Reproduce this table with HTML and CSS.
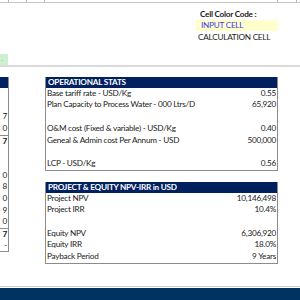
FILE: index.html
```html
<!DOCTYPE html>
<html>
<head>
<meta charset="utf-8">
<link rel="stylesheet" href="styles.css">
</head>
<body>
<div class="sheet">
  <div class="colbar">
    <span class="col w9"></span><span class="col w18"></span><span class="col w18"></span><span class="col w233"></span><span class="col w19"></span>
  </div>
  <div class="legend">
    <div class="legend-title">Cell Color Code :</div>
    <div class="legend-input">INPUT CELL</div>
    <div class="legend-calc">CALCULATION CELL</div>
  </div>
  <div class="green-row"><div class="green-cell">-</div></div>
  <div class="pane-line"></div>
  <div class="main">
    <div class="left-table">
      <div class="lt-hdr"></div>
      <div class="lt-row"></div>
      <div class="lt-row"></div>
      <div class="lt-row">7</div>
      <div class="lt-row">0</div>
      <div class="lt-row total">7</div>
      <div class="lt-row"></div>
      <div class="lt-row"></div>
      <div class="lt-row">0</div>
      <div class="lt-row">8</div>
      <div class="lt-row">0</div>
      <div class="lt-row">9</div>
      <div class="lt-row">0</div>
      <div class="lt-row total">7</div>
      <div class="lt-row">-</div>
    </div>
    <div class="right-col">
      <section class="box">
        <div class="box-hdr">OPERATIONAL STATS</div>
        <div class="row"><span>Base tariff rate - USD/Kg</span><span>0.55</span></div>
        <div class="row"><span>Plan Capacity to Process Water - 000 Ltrs/D</span><span>65,920</span></div>
        <div class="row"></div>
        <div class="row"><span>O&amp;M cost (Fixed &amp; variable) - USD/Kg</span><span>0.40</span></div>
        <div class="row"><span>Geneal &amp; Admin cost Per Annum - USD</span><span>500,000</span></div>
        <div class="row"></div>
        <div class="row"><span>LCP - USD/Kg</span><span>0.56</span></div>
      </section>
      <section class="box">
        <div class="box-hdr">PROJECT &amp; EQUITY NPV-IRR in USD</div>
        <div class="row"><span>Project NPV</span><span>10,146,498</span></div>
        <div class="row"><span>Project IRR</span><span>10.4%</span></div>
        <div class="row"></div>
        <div class="row"><span>Equity NPV</span><span>6,306,920</span></div>
        <div class="row"><span>Equity IRR</span><span>18.0%</span></div>
        <div class="row"><span>Payback Period</span><span>9 Years</span></div>
      </section>
    </div>
  </div>
  <div class="footer-line"></div>
  <div class="footer-bar"></div>
</div>
</body>
</html>
```
FILE: styles.css
```css
html, body {
  margin: 0;
  padding: 0;
  background: #ffffff;
}
.sheet {
  width: 300px;
  height: 300px;
  overflow: hidden;
  font-family: "Lato", "Liberation Sans", sans-serif;
  font-size: 8.2px;
  letter-spacing: -0.25px;
  color: #1a1a1a;
  display: flex;
  flex-direction: column;
}
.colbar {
  height: 2px;
  display: flex;
  border-bottom: 1px solid #c4c4c4;
}
.col {
  border-right: 1px solid #b4b4b4;
  box-sizing: border-box;
}
.w9 { width: 9px; flex: none; }
.w18 { width: 18px; flex: none; }
.w233 { width: 233px; flex: none; }
.w19 { width: 19px; flex: none; }
.legend {
  margin-top: 5px;
  padding-left: 196px;
  width: 82px;
  display: flex;
  flex-direction: column;
}
.legend-title {
  height: 12px;
  line-height: 12px;
  font-weight: bold;
  padding-left: 4px;
}
.legend-input {
  height: 11px;
  line-height: 11px;
  background: #ffffcc;
  color: #3b3bf0;
  padding-left: 5px;
}
.legend-calc {
  height: 12px;
  line-height: 12px;
  padding-left: 2px;
}
.green-row {
  margin-top: 11px;
  height: 11px;
}
.green-cell {
  width: 8px;
  height: 11px;
  background: #cdf0d2;
  color: #8aa88e;
  font-size: 6px;
  line-height: 11px;
  padding-left: 1px;
  box-sizing: border-box;
}
.pane-line {
  height: 2px;
  background: #dadada;
}
.main {
  display: flex;
  align-items: flex-start;
  margin-top: 10px;
  height: 208px;
}
.left-table {
  width: 8px;
  border-right: 1px solid #8c8c8c;
  border-bottom: 1px solid #8c8c8c;
  flex: none;
}
.lt-hdr {
  height: 11px;
  background: #002060;
}
.lt-row {
  height: 11.7px;
  line-height: 11.7px;
  text-align: right;
  padding-right: 1px;
  box-sizing: border-box;
}
.lt-row.total {
  font-weight: bold;
  border-top: 1px solid #8c8c8c;
}
.right-col {
  margin-left: 36px;
  width: 233px;
  display: flex;
  flex-direction: column;
  gap: 11px;
}
.box {
  border: 1px solid #8c8c8c;
  border-top: none;
}
.box-hdr {
  height: 11px;
  line-height: 11px;
  background: #002060;
  color: #ffffff;
  font-weight: bold;
  padding-left: 2px;
}
.row {
  height: 11.7px;
  line-height: 11.7px;
  display: flex;
  justify-content: space-between;
  padding: 0 1px 0 1px;
}
.footer-line {
  margin-top: 13px;
  height: 1px;
  background: #d0d0d0;
}
.footer-bar {
  margin-top: 1px;
  height: 13px;
  background: #00335f;
}
```
